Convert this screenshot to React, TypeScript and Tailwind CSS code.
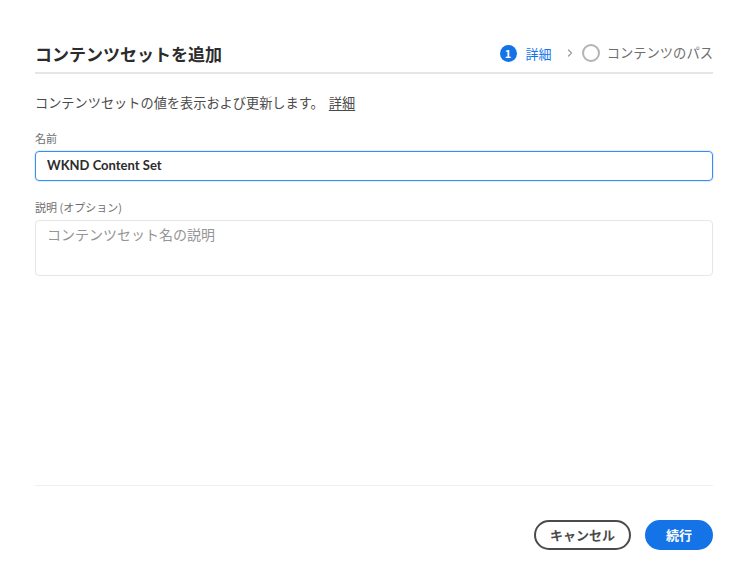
const font = { fontFamily: '"Noto Sans CJK JP", "Open Sans", sans-serif' };

export default function App() {
  return (
    <div
      className="w-[750px] h-[588px] bg-white flex flex-col pl-[35px] pr-[37px] pt-[40px] pb-[38px] text-[#2c2c2c]"
      style={font}
    >
      {/* header */}
      <div className="flex items-center justify-between h-[26px]">
        <h1 className="text-[17px] font-bold leading-none text-[#2c2c2c]">
          コンテンツセットを追加
        </h1>
        <div className="flex items-center leading-none">
          <span className="w-[17px] h-[17px] rounded-full bg-[#1473e6] text-white text-[11px] font-bold flex items-center justify-center">
            1
          </span>
          <span className="ml-[9px] text-[13px] text-[#1473e6]">詳細</span>
          <svg className="ml-[13px] w-[10px] h-[10px]" viewBox="0 0 10 10" fill="none">
            <path d="M3.5 2l3 3-3 3" stroke="#9a9a9a" strokeWidth="1.2" strokeLinecap="round" strokeLinejoin="round" />
          </svg>
          <span className="ml-[7px] w-[18px] h-[18px] rounded-full border-2 border-[#b3b3b3]" />
          <span className="ml-[7px] text-[#6e6e6e] text-[13.3px]">コンテンツのパス</span>
        </div>
      </div>
      <div className="mt-[6px] h-[2px] bg-[#e6e6e6]" />

      {/* body */}
      <p className="mt-[20px] text-[13.2px] leading-[18px] text-[#4b4b4b]">
        コンテンツセットの値を表示および更新します。
        <span className="ml-[5px] underline underline-offset-2">詳細</span>
      </p>

      <label className="mt-[19px] text-[11px] leading-[14px] text-[#6e6e6e]">名前</label>
      <div className="mt-[6px] h-[30px] rounded-[4px] border border-[#378ef0] flex items-center px-[11px] shadow-[0_0_0_1px_rgba(55,142,240,0.15)]">
        <span className="text-[13px] font-bold text-[#2c2c2c]" style={{ fontFamily: 'Lato, "Open Sans", sans-serif' }}>
          WKND Content Set
        </span>
      </div>

      <label className="mt-[19px] text-[11px] leading-[14px] text-[#6e6e6e]">説明 (オプション)</label>
      <div className="mt-[6px] h-[56px] rounded-[4px] border border-[#e6e6e6] px-[11px] pt-[3px]">
        <span className="block text-[14px] leading-[20px] text-[#959595]">コンテンツセット名の説明</span>
      </div>

      <div className="flex-1" />

      {/* footer */}
      <div className="h-[1px] bg-[#f0f0f0]" />
      <div className="mt-[34px] flex justify-end gap-[14px]">
        <button className="h-[30px] w-[97px] rounded-full border-2 border-[#4b4b4b] text-[13px] font-bold text-[#4b4b4b]">
          キャンセル
        </button>
        <button className="h-[30px] w-[68px] rounded-full bg-[#1473e6] text-[13px] font-bold text-white">
          続行
        </button>
      </div>
    </div>
  );
}
